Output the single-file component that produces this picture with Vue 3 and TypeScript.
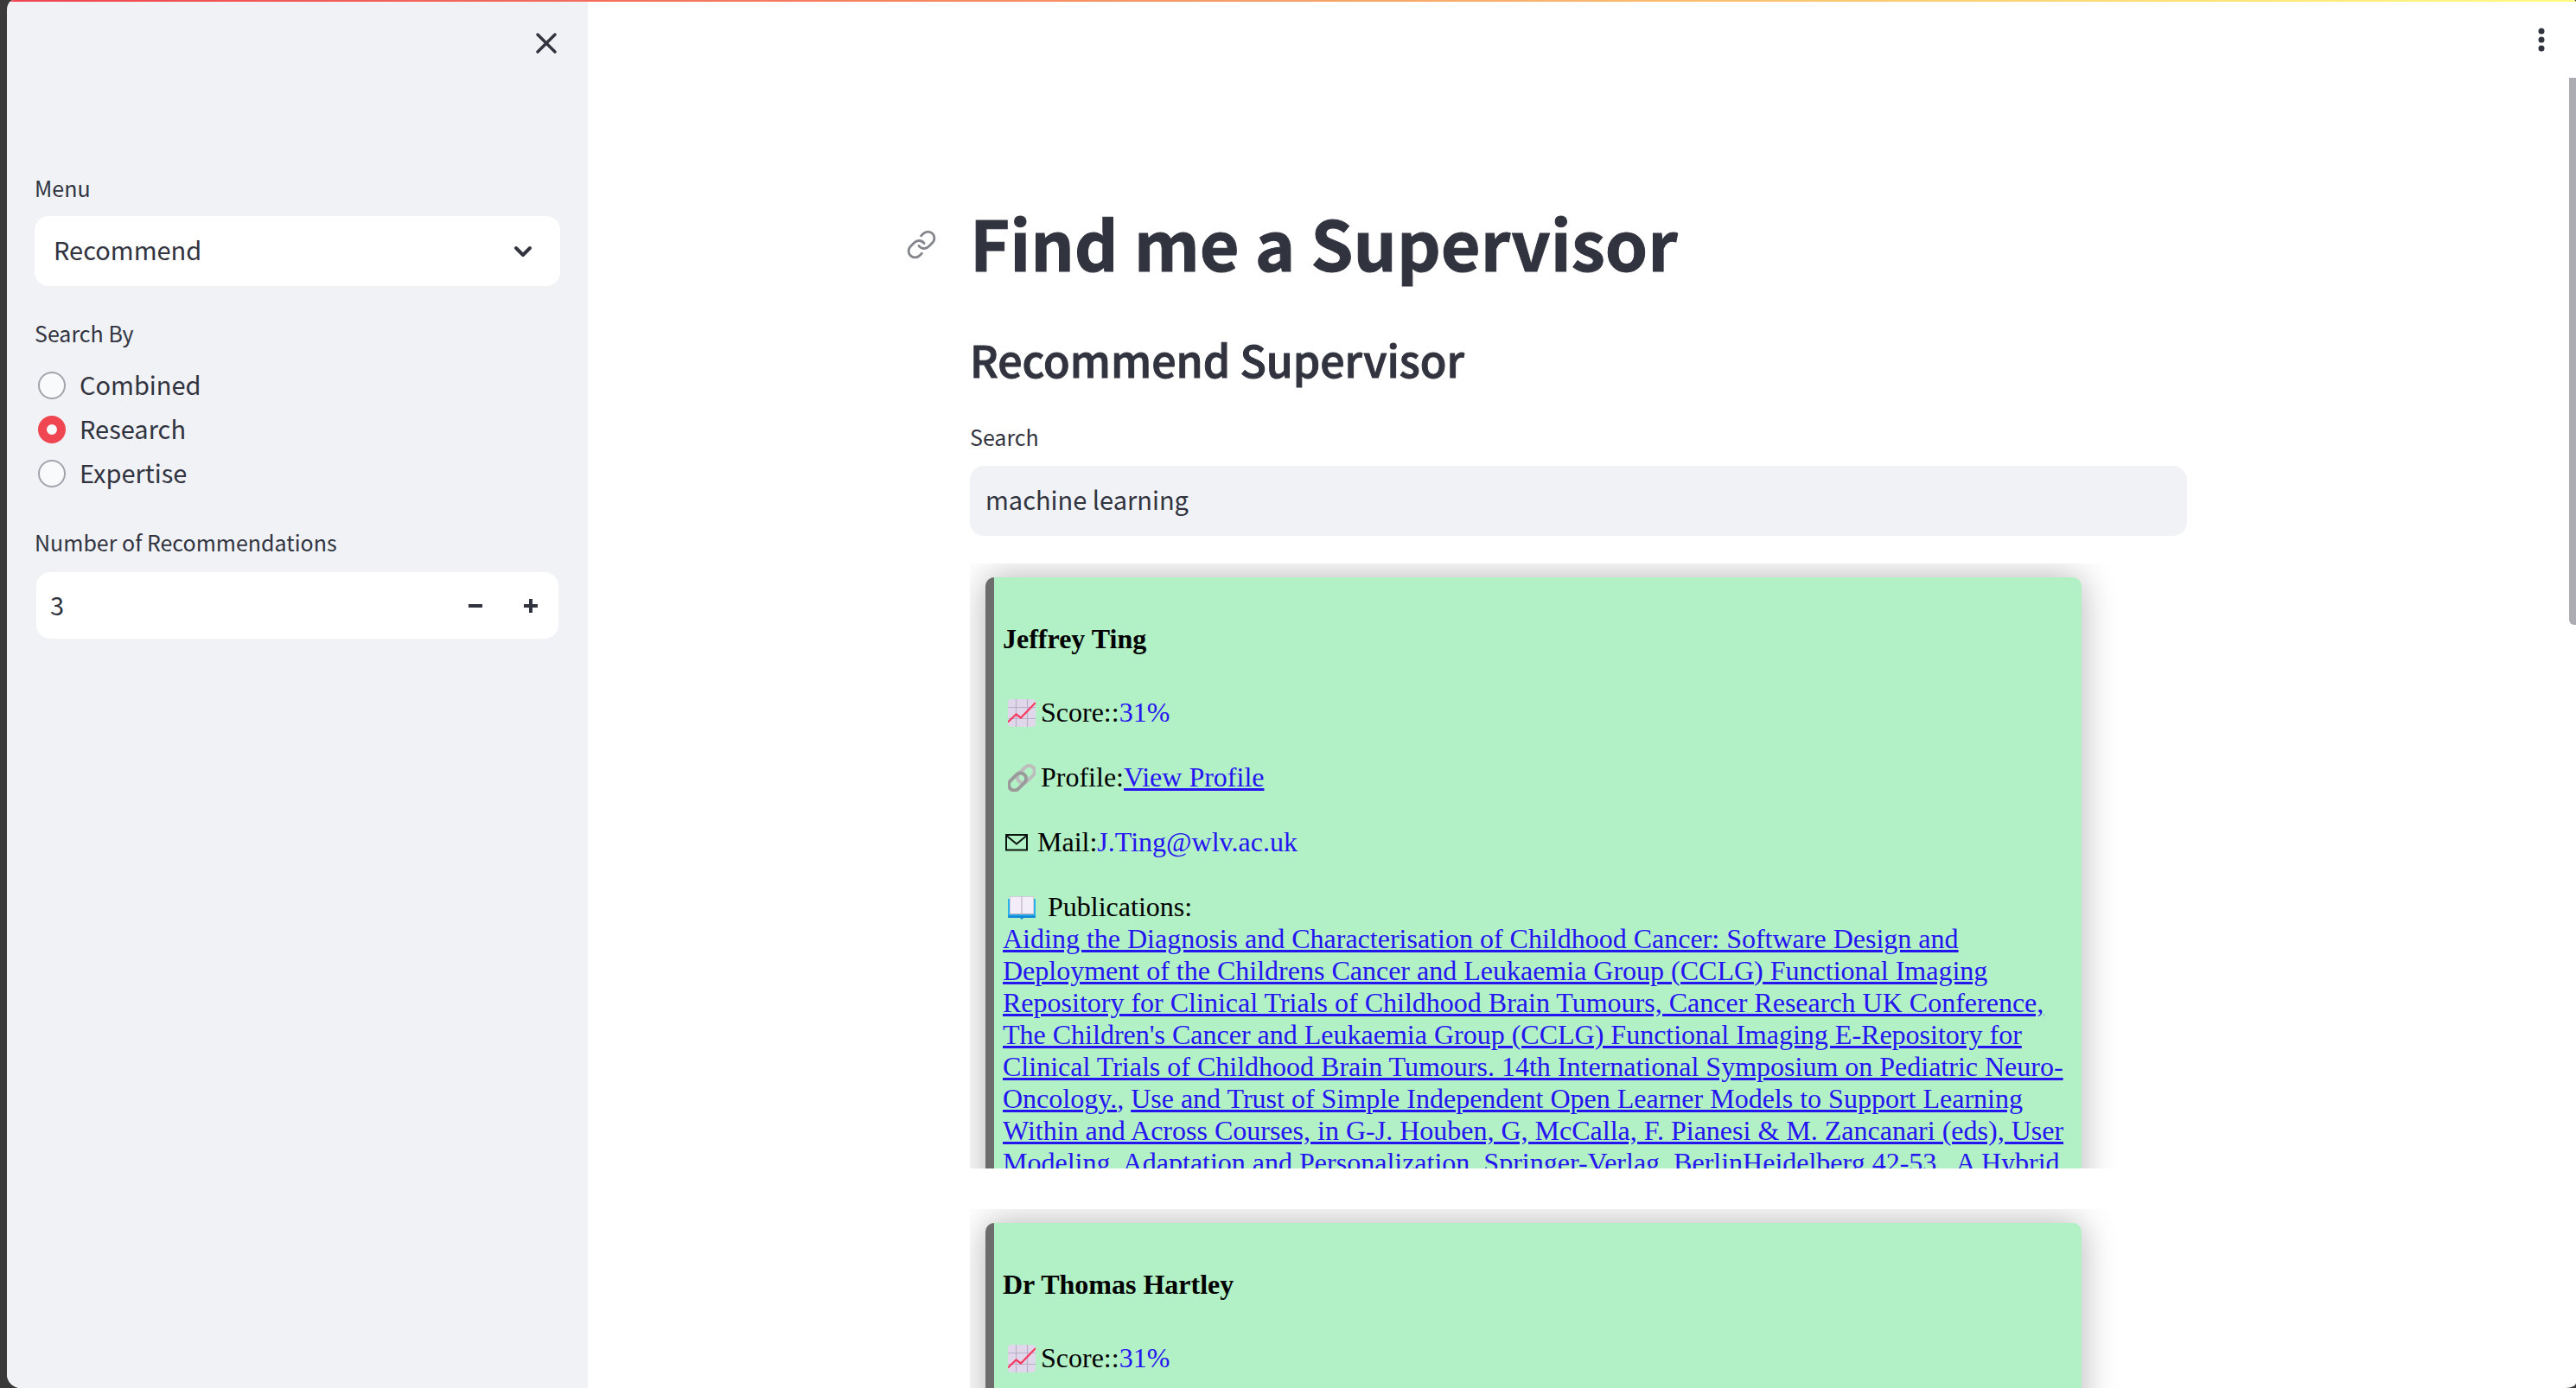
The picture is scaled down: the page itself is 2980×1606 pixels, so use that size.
<script setup lang="ts">
import { ref } from 'vue'

interface Supervisor {
  name: string
  score: string
  mail?: string
  publications?: string[]
}

const menu = ref('Recommend')
const searchBy = ref('Research')
const searchOptions = ['Combined', 'Research', 'Expertise']
const count = ref(3)
const query = ref('machine learning')

const supervisors: Supervisor[] = [
  {
    name: 'Jeffrey Ting',
    score: '31%',
    mail: 'J.Ting@wlv.ac.uk',
    publications: [
      "Aiding the Diagnosis and Characterisation of Childhood Cancer: Software Design and Deployment of the Childrens Cancer and Leukaemia Group (CCLG) Functional Imaging Repository for Clinical Trials of Childhood Brain Tumours, Cancer Research UK Conference, The Children's Cancer and Leukaemia Group (CCLG) Functional Imaging E-Repository for Clinical Trials of Childhood Brain Tumours. 14th International Symposium on Pediatric Neuro-Oncology.",
      'Use and Trust of Simple Independent Open Learner Models to Support Learning Within and Across Courses, in G-J. Houben, G, McCalla, F. Pianesi & M. Zancanari (eds), User Modeling, Adaptation and Personalization, Springer-Verlag, BerlinHeidelberg 42-53.',
      'A Hybrid',
    ],
  },
  { name: 'Dr Thomas Hartley', score: '31%' },
]
</script>

<template>
  <div class="desktop">
    <div class="app">
      <div class="rainbow"></div>
      <aside class="sidebar">
        <div class="sidebar-head">
          <button class="icon-button" type="button" aria-label="Close sidebar">
            <svg width="24" height="24" viewBox="0 0 24 24" fill="none" stroke="#31333f" stroke-width="3.4" stroke-linecap="round">
              <path d="M2 2 22 22M22 2 2 22" />
            </svg>
          </button>
        </div>

        <div class="field">
          <label class="label" for="menu">Menu</label>
          <div class="select-box">
            <select id="menu" v-model="menu">
              <option>Recommend</option>
            </select>
            <svg class="chevron" width="22" height="16" viewBox="0 0 22 16" fill="none" stroke="#31333f" stroke-width="4" stroke-linecap="round" stroke-linejoin="round">
              <path d="M3 4 11 12 19 4" />
            </svg>
          </div>
        </div>

        <fieldset class="field radios">
          <legend class="label">Search By</legend>
          <label v-for="option in searchOptions" :key="option" class="radio">
            <input v-model="searchBy" type="radio" name="search-by" :value="option" />
            <span>{{ option }}</span>
          </label>
        </fieldset>

        <div class="field">
          <label class="label" for="count">Number of Recommendations</label>
          <div class="number-box">
            <input id="count" v-model="count" type="number" />
            <button class="step" type="button" aria-label="Decrease" @click="count--">
              <svg width="16" height="16" viewBox="0 0 16 16" fill="#31333f"><path d="M0 6h16v4H0z" /></svg>
            </button>
            <button class="step" type="button" aria-label="Increase" @click="count++">
              <svg width="16" height="16" viewBox="0 0 16 16" fill="#31333f"><path d="M0 6h6V0h4v6h6v4h-6v6H6v-6H0z" /></svg>
            </button>
          </div>
        </div>
      </aside>

      <main class="main">
        <button class="icon-button kebab" type="button" aria-label="Main menu">
          <svg width="8" height="28" viewBox="0 0 8 28" fill="#31333f">
            <circle cx="4" cy="4" r="3.5" /><circle cx="4" cy="14" r="3.5" /><circle cx="4" cy="24" r="3.5" />
          </svg>
        </button>
        <div class="content">
          <h1>
            <a class="anchor" href="#find-me-a-supervisor" aria-label="Link to heading">
              <svg width="36" height="36" viewBox="0 0 24 24" fill="none" stroke="#85868d" stroke-width="1.9" stroke-linecap="round" stroke-linejoin="round">
                <path d="M10 13a5 5 0 0 0 7.54.54l3-3a5 5 0 0 0-7.07-7.07l-1.72 1.71" />
                <path d="M14 11a5 5 0 0 0-7.54-.54l-3 3a5 5 0 0 0 7.07 7.07l1.71-1.71" />
              </svg>
            </a>
            Find me a Supervisor
          </h1>
          <h2>Recommend Supervisor</h2>
          <label class="label" for="query">Search</label>
          <input id="query" v-model="query" class="query" type="text" />

          <section v-for="person in supervisors" :key="person.name" class="frame">
            <article class="card">
              <h4>{{ person.name }}</h4>
              <p class="row">
                <svg class="emoji" width="32" height="32" viewBox="0 0 32 32">
                  <rect width="32" height="32" rx="4" fill="#e0d8ea" />
                  <path d="M9.500 0v32M22.500 0v32M0 9.500h32M0 22.500h32" stroke="#b9b0c7" stroke-width="1.200" />
                  <path d="M0 26.500 9.500 17.500 15 21.500 32 4" fill="none" stroke="#f8395f" stroke-width="2.200" />
                </svg>
                Score::<span class="value">{{ person.score }}</span>
              </p>
              <template v-if="person.mail">
                <p class="row">
                  <svg class="emoji" width="32" height="32" viewBox="0 0 32 32" fill="none" stroke-width="4">
                    <rect x="9.500" y="5.500" width="23" height="13" rx="6.500" transform="rotate(-45 21 12)" stroke="#bdbdbd" />
                    <rect x="-.500" y="14" width="23" height="13" rx="6.500" transform="rotate(-45 11 20.500)" stroke="#9a9a9a" />
                  </svg>
                  Profile:<a href="#profile">View Profile</a>
                </p>
                <p class="row mail">
                  <svg class="emoji" width="26" height="20" viewBox="0 0 26 20" fill="none" stroke="#0a120d" stroke-width="2">
                    <path d="M1 1h24v17.500H1zM1.500 2 13 11.500 24.500 2" />
                  </svg>
                  Mail:<span class="value">{{ person.mail }}</span>
                </p>
                <p class="row book">
                  <svg class="emoji" width="32" height="28" viewBox="0 0 32 28">
                    <path d="M0 4h32v21q0 1-1 1H18l-2 2-2-2H1q-1 0-1-1z" fill="#1286d8" />
                    <path d="M0 4h32v19.500H0z" fill="#28b0ea" />
                    <path d="M2 2q0-1 1-1h26q1 0 1 1v20H2z" fill="#b4a9bd" />
                    <path d="M2.500 2q0-.500.500-.500h12.500V21H2.500zM16.500 1.500H29q.500 0 .500.500v19h-13z" fill="#f3edf9" />
                  </svg>
                  Publications:
                </p>
                <p class="publications">
                  <template v-for="(title, i) in person.publications" :key="title"
                    ><span v-if="i > 0" class="value">, </span><a href="#publication">{{ title }}</a></template
                  >
                </p>
              </template>
            </article>
          </section>
        </div>
      </main>
      <div class="scrollbar"><div class="thumb"></div></div>
    </div>
  </div>
</template>

<style>
body {
  margin: 0;
  background: #3a3a3a;
}
</style>

<style scoped>
* {
  box-sizing: border-box;
}
.desktop {
  height: 100vh;
  padding-left: 8px;
  background: #3a3a3a;
  overflow: hidden;
  font-family: 'Noto Sans CJK SC', 'Noto Sans', sans-serif;
  color: #31333f;
}
.app {
  position: relative;
  display: flex;
  height: 100%;
  background: #fff;
  border-radius: 8px 4px 12px 16px / 12px 3px 6px 16px;
  overflow: hidden;
}
.rainbow {
  position: absolute;
  top: 0;
  left: 0;
  right: 0;
  height: 2px;
  background: linear-gradient(90deg, #f04550, #fffd80);
}
.sidebar {
  flex: none;
  width: 672px;
  padding: 0 32px;
  background: #f0f2f6;
}
.sidebar-head {
  display: flex;
  justify-content: flex-end;
  align-items: flex-start;
  height: 196px;
  padding-top: 34px;
}
.icon-button {
  display: flex;
  padding: 4px;
  border: 0;
  background: none;
}
.field {
  margin: 0 0 33px;
  padding: 0;
  border: 0;
}
.label {
  display: block;
  padding: 0;
  font-size: 25px;
  line-height: 42px;
}
.select-box,
.number-box {
  display: flex;
  align-items: center;
  height: 81px;
  margin-top: 12px;
  border-radius: 16px;
  background: #fff;
}
select,
input {
  font-family: inherit;
  font-size: 29px;
  color: inherit;
}
select {
  flex: 1;
  height: 100%;
  margin-right: -54px;
  padding: 0 54px 5px 22px;
  border: 0;
  background: none;
  appearance: none;
}
.chevron {
  margin-right: 32px;
  pointer-events: none;
}
.radios .label {
  margin-bottom: 14px;
}
.radio {
  display: flex;
  align-items: center;
  gap: 16px;
  height: 51px;
  font-size: 29px;
  line-height: 46px;
}
.radio span {
  padding-bottom: 4px;
}
.radio input {
  width: 32px;
  height: 32px;
  margin: 0 0 0 4px;
  border: 2px solid #a3a4ab;
  border-radius: 50%;
  background: #f9fafc;
  appearance: none;
}
.radio input:checked {
  border: 10px solid #f04652;
}
.number-box {
  border: 2px solid #f0f2f6;
  border-radius: 18px;
}
.number-box input {
  flex: 1;
  min-width: 0;
  padding: 0 0 4px 16px;
  border: 0;
  background: none;
  appearance: textfield;
}
.number-box input::-webkit-inner-spin-button {
  appearance: none;
}
.step {
  display: flex;
  justify-content: center;
  width: 64px;
  padding: 0;
  border: 0;
  background: none;
}
.main {
  position: relative;
  flex: 1;
  overflow: hidden;
}
.kebab {
  position: absolute;
  top: 28px;
  right: 24px;
}
.content {
  max-width: 1408px;
  margin: 0 auto;
  padding-top: 227px;
}
h1,
h2 {
  -webkit-text-stroke: 1px #31333f;
}
h1 {
  position: relative;
  margin: 0 0 48px;
  font-size: 79px;
  font-weight: 700;
  line-height: 106px;
}
.anchor {
  position: absolute;
  top: 38px;
  left: -74px;
  display: flex;
}
h2 {
  margin: 0 0 35px;
  font-size: 50px;
  font-weight: 500;
  line-height: 68px;
}
.query {
  display: block;
  width: 100%;
  height: 81px;
  margin: 13px 0 32px;
  padding: 0 18px 5px;
  border: 0;
  border-radius: 16px;
  background: #f0f2f6;
}
.frame {
  height: 700px;
  margin-bottom: 47px;
  padding: 16px 18px;
  overflow: hidden;
}
.card {
  width: 1268px;
  max-width: 100%;
  min-height: 740px;
  padding: 10px;
  border-left: 10px solid #6c6c6c;
  border-radius: 10px;
  background: #b2f0c6;
  box-shadow: 0 0 40px rgba(0, 0, 0, 0.3);
  font-family: 'Liberation Serif', serif;
  font-size: 32px;
  line-height: 37px;
  color: #000;
}
h4 {
  margin: 43px 0 48px;
  font-size: 32px;
}
.row {
  display: flex;
  align-items: center;
  height: 37px;
  margin: 0 0 38px;
}
.emoji {
  flex: none;
  margin: 0 6px;
}
.mail .emoji {
  margin: 0 11px 0 3px;
}
.book {
  margin: 0;
}
.book .emoji {
  margin-right: 14px;
}
.publications {
  margin: 0;
}
.value,
a {
  color: #2414f0;
}
.card a {
  text-decoration-thickness: 3px;
}
.scrollbar {
  flex: none;
  width: 8px;
  padding-top: 90px;
}
.thumb {
  height: 633px;
  border-radius: 0 0 0 6px;
  background: #adacb2;
}
</style>
